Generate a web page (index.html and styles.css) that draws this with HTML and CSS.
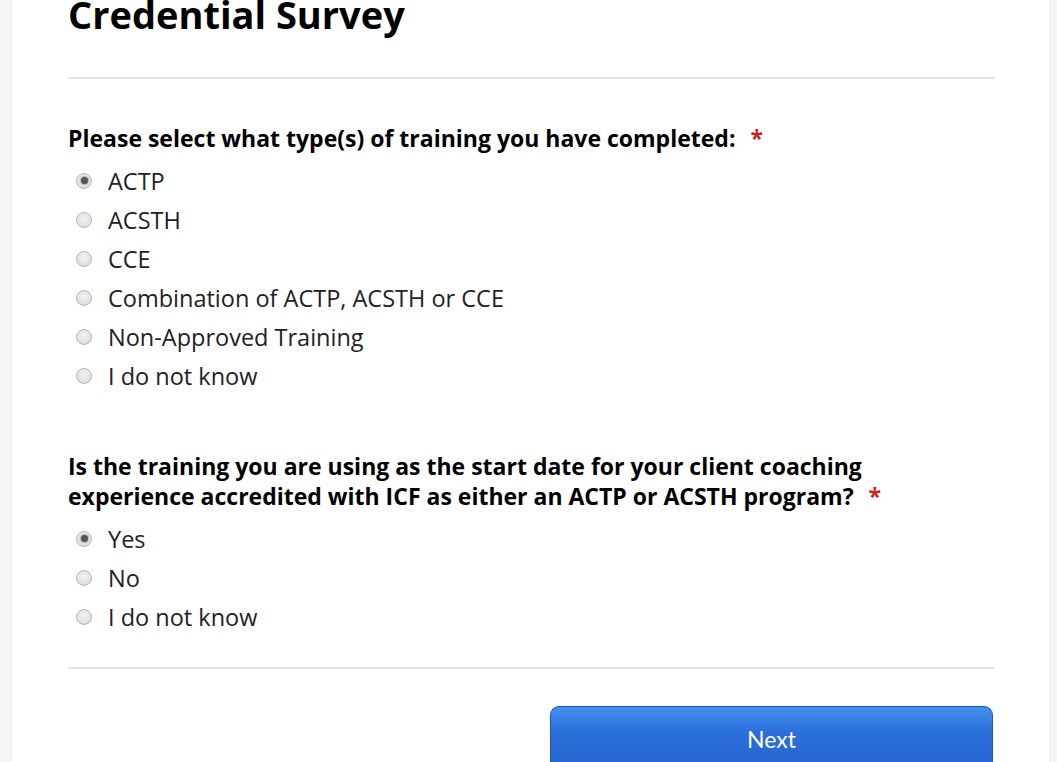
FILE: index.html
```html
<!DOCTYPE html>
<html>
<head>
<meta charset="utf-8">
<link rel="stylesheet" href="styles.css">
</head>
<body>
<div class="card">
  <h1 class="title">Credential Survey</h1>
  <hr class="rule">
  <div class="question q1">
    <div class="label">Please select what type(s) of training you have completed: <span class="req">*</span></div>
    <ul class="options">
      <li><span class="radio checked"></span>ACTP</li>
      <li><span class="radio"></span>ACSTH</li>
      <li><span class="radio"></span>CCE</li>
      <li><span class="radio"></span>Combination of ACTP, ACSTH or CCE</li>
      <li><span class="radio"></span>Non-Approved Training</li>
      <li><span class="radio"></span>I do not know</li>
    </ul>
  </div>
  <div class="question q2">
    <div class="label">Is the training you are using as the start date for your client coaching<br>experience accredited with ICF as either an ACTP or ACSTH program? <span class="req">*</span></div>
    <ul class="options">
      <li><span class="radio checked"></span>Yes</li>
      <li><span class="radio"></span>No</li>
      <li><span class="radio"></span>I do not know</li>
    </ul>
  </div>
  <hr class="rule rule2">
  <div class="actions">
    <button class="next">Next</button>
  </div>
</div>
</body>
</html>
```
FILE: styles.css
```css
html, body {
  margin: 0;
  padding: 0;
  height: 100%;
  overflow: hidden;
  background: #f4f4f4;
}
body {
  font-family: "Open Sans", "Noto Sans", sans-serif;
  color: #111;
}
.card {
  display: flow-root;
  background: #fff;
  margin: 0 8px 0 12px;
  padding: 0 54px 0 56px;
  height: 100%;
  box-shadow: 0 0 2px rgba(0,0,0,0.06);
}
.title {
  margin: -8px 0 0 0;
  font-size: 38px;
  line-height: 44px;
  font-weight: 700;
  color: #000;
}
.rule {
  border: 0;
  height: 2px;
  background: #e3e3e3;
  margin: 41px 0 0 0;
}
.question {
  margin-top: 44px;
}
.q2 { margin-top: 56px; }
.label {
  font-size: 23px;
  line-height: 30px;
  font-weight: 700;
  color: #000;
}
.req {
  color: #cc1f1f;
  margin-left: 9px;
}
.options {
  list-style: none;
  margin: 8px 0 0 0;
  padding: 0;
}
.options li {
  display: flex;
  align-items: center;
  height: 39px;
  font-size: 23.5px;
  color: #222;
}
.radio {
  width: 14px;
  height: 14px;
  border-radius: 50%;
  border: 1px solid #b8b8b8;
  background: radial-gradient(circle at 50% 40%, #f2f2f2 0, #e4e4e4 55%, #d2d2d2 100%);
  margin: 0 16px 0 8px;
  box-sizing: content-box;
  position: relative;
  flex: none;
}
.radio.checked::after {
  content: "";
  position: absolute;
  left: 3.5px;
  top: 3.5px;
  width: 7px;
  height: 7px;
  border-radius: 50%;
  background: #555;
  box-shadow: 0 0 1px 1px rgba(120,120,120,0.5);
}
.rule2 { margin-top: 31px; }
.actions {
  display: flex;
  justify-content: flex-end;
  margin-top: 37px;
  padding-right: 2px;
}
.next {
  width: 443px;
  height: 70px;
  border: 1px solid #1d56b0;
  border-radius: 9px;
  background: linear-gradient(#4190ee, #2a6dd9 40%, #2664d2);
  color: #fff;
  font-family: "Lato", "Open Sans", sans-serif;
  font-size: 23px;
  padding: 0 0 4px 0;
}
```
